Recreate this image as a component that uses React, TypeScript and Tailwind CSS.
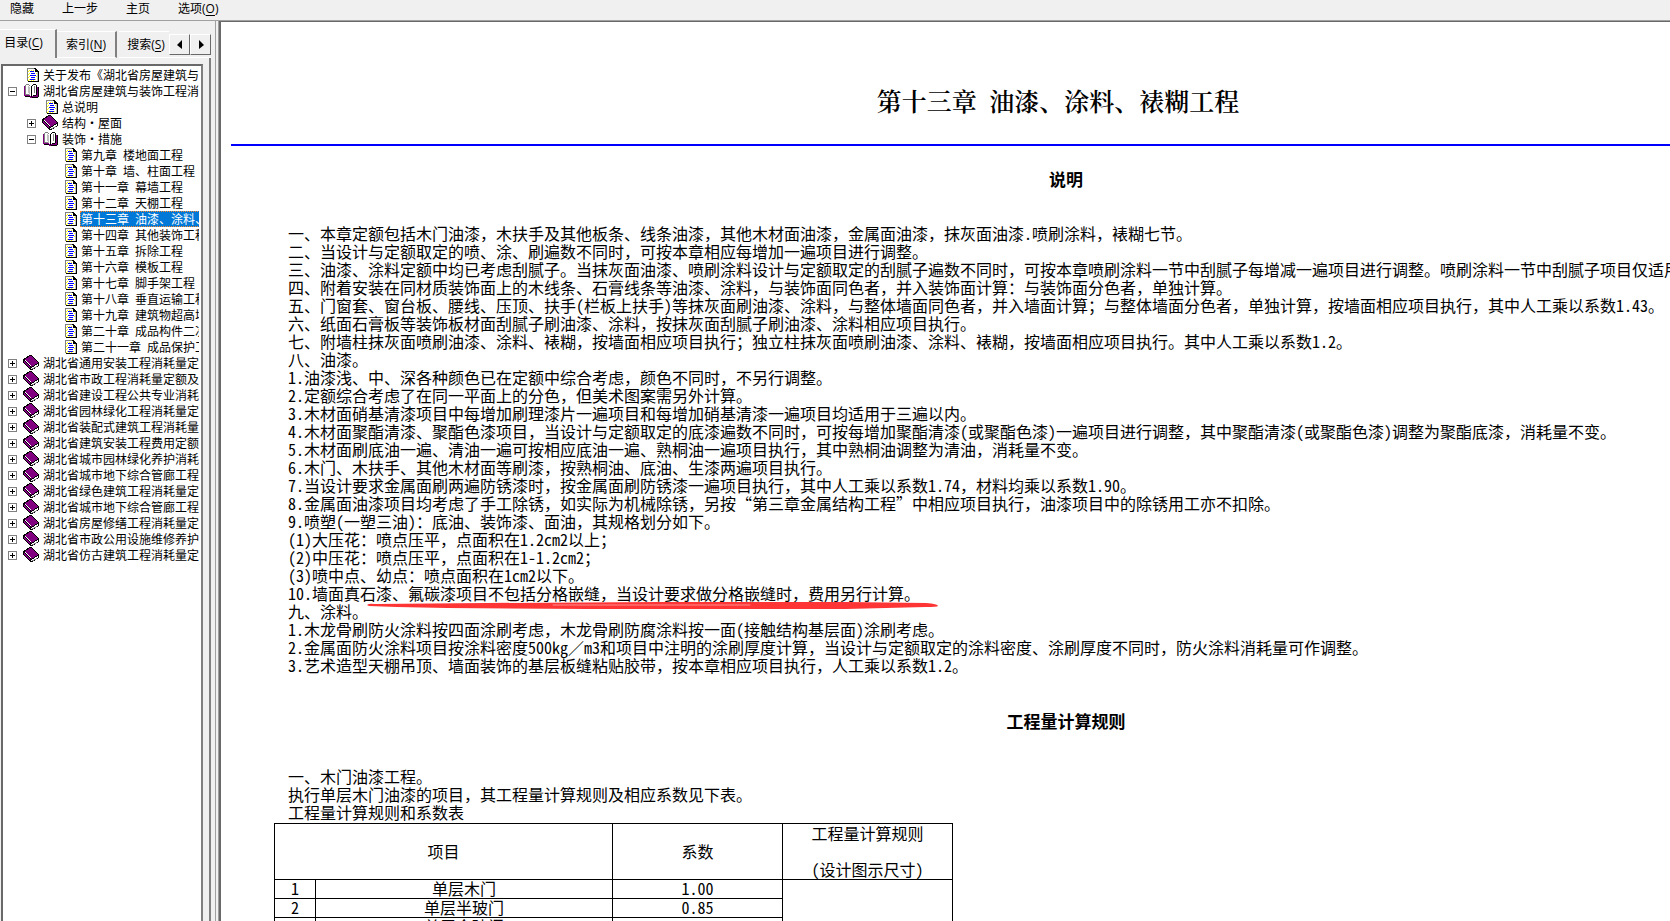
import React from "react";

type IconKind = "page" | "open" | "closed";

type Node = {
  level: 0 | 1 | 2;
  icon: IconKind;
  label: string;
  toggle?: "+" | "-";
  selected?: boolean;
};

const closedBook = (label: string): Node => ({ level: 0, icon: "closed", label, toggle: "+" });
const chapter = (label: string, selected = false): Node => ({ level: 2, icon: "page", label, selected });

const nodes: Node[] = [
  { level: 0, icon: "page", label: "关于发布《湖北省房屋建筑与" },
  { level: 0, icon: "open", label: "湖北省房屋建筑与装饰工程消", toggle: "-" },
  { level: 1, icon: "page", label: "总说明" },
  { level: 1, icon: "closed", label: "结构・屋面", toggle: "+" },
  { level: 1, icon: "open", label: "装饰・措施", toggle: "-" },
  chapter("第九章 楼地面工程"),
  chapter("第十章 墙、柱面工程"),
  chapter("第十一章 幕墙工程"),
  chapter("第十二章 天棚工程"),
  chapter("第十三章 油漆、涂料、裱糊工程", true),
  chapter("第十四章 其他装饰工程"),
  chapter("第十五章 拆除工程"),
  chapter("第十六章 模板工程"),
  chapter("第十七章 脚手架工程"),
  chapter("第十八章 垂直运输工程"),
  chapter("第十九章 建筑物超高增加费"),
  chapter("第二十章 成品构件二次运输"),
  chapter("第二十一章 成品保护工程"),
  closedBook("湖北省通用安装工程消耗量定"),
  closedBook("湖北省市政工程消耗量定额及"),
  closedBook("湖北省建设工程公共专业消耗"),
  closedBook("湖北省园林绿化工程消耗量定"),
  closedBook("湖北省装配式建筑工程消耗量"),
  closedBook("湖北省建筑安装工程费用定额"),
  closedBook("湖北省城市园林绿化养护消耗"),
  closedBook("湖北省城市地下综合管廊工程"),
  closedBook("湖北省绿色建筑工程消耗量定"),
  closedBook("湖北省城市地下综合管廊工程"),
  closedBook("湖北省房屋修缮工程消耗量定"),
  closedBook("湖北省市政公用设施维修养护"),
  closedBook("湖北省仿古建筑工程消耗量定"),
];

const notes: string[] = [
  "一、本章定额包括木门油漆，木扶手及其他板条、线条油漆，其他木材面油漆，金属面油漆，抹灰面油漆.喷刷涂料，裱糊七节。",
  "二、当设计与定额取定的喷、涂、刷遍数不同时，可按本章相应每增加一遍项目进行调整。",
  "三、油漆、涂料定额中均已考虑刮腻子。当抹灰面油漆、喷刷涂料设计与定额取定的刮腻子遍数不同时，可按本章喷刷涂料一节中刮腻子每增减一遍项目进行调整。喷刷涂料一节中刮腻子项目仅适用",
  "四、附着安装在同材质装饰面上的木线条、石膏线条等油漆、涂料，与装饰面同色者，并入装饰面计算：与装饰面分色者，单独计算。",
  "五、门窗套、窗台板、腰线、压顶、扶手(栏板上扶手)等抹灰面刷油漆、涂料，与整体墙面同色者，并入墙面计算；与整体墙面分色者，单独计算，按墙面相应项目执行，其中人工乘以系数1.43。",
  "六、纸面石膏板等装饰板材面刮腻子刷油漆、涂料，按抹灰面刮腻子刷油漆、涂料相应项目执行。",
  "七、附墙柱抹灰面喷刷油漆、涂料、裱糊，按墙面相应项目执行；独立柱抹灰面喷刷油漆、涂料、裱糊，按墙面相应项目执行。其中人工乘以系数1.2。",
  "八、油漆。",
  "1.油漆浅、中、深各种颜色已在定额中综合考虑，颜色不同时，不另行调整。",
  "2.定额综合考虑了在同一平面上的分色，但美术图案需另外计算。",
  "3.木材面硝基清漆项目中每增加刷理漆片一遍项目和每增加硝基清漆一遍项目均适用于三遍以内。",
  "4.木材面聚酯清漆、聚酯色漆项目，当设计与定额取定的底漆遍数不同时，可按每增加聚酯清漆(或聚酯色漆)一遍项目进行调整，其中聚酯清漆(或聚酯色漆)调整为聚酯底漆，消耗量不变。",
  "5.木材面刷底油一遍、清油一遍可按相应底油一遍、熟桐油一遍项目执行，其中熟桐油调整为清油，消耗量不变。",
  "6.木门、木扶手、其他木材面等刷漆，按熟桐油、底油、生漆两遍项目执行。",
  "7.当设计要求金属面刷两遍防锈漆时，按金属面刷防锈漆一遍项目执行，其中人工乘以系数1.74，材料均乘以系数1.90。",
  "8.金属面油漆项目均考虑了手工除锈，如实际为机械除锈，另按“第三章金属结构工程”中相应项目执行，油漆项目中的除锈用工亦不扣除。",
  "9.喷塑(一塑三油)：底油、装饰漆、面油，其规格划分如下。",
  "(1)大压花：喷点压平，点面积在1.2cm2以上；",
  "(2)中压花：喷点压平，点面积在1-1.2cm2；",
  "(3)喷中点、幼点：喷点面积在1cm2以下。",
  "10.墙面真石漆、氟碳漆项目不包括分格嵌缝，当设计要求做分格嵌缝时，费用另行计算。",
  "九、涂料。",
  "1.木龙骨刷防火涂料按四面涂刷考虑，木龙骨刷防腐涂料按一面(接触结构基层面)涂刷考虑。",
  "2.金属面防火涂料项目按涂料密度500kg／m3和项目中注明的涂刷厚度计算，当设计与定额取定的涂料密度、涂刷厚度不同时，防火涂料消耗量可作调整。",
  "3.艺术造型天棚吊顶、墙面装饰的基层板缝粘贴胶带，按本章相应项目执行，人工乘以系数1.2。",
];

const rules: string[] = [
  "一、木门油漆工程。",
  "执行单层木门油漆的项目，其工程量计算规则及相应系数见下表。",
  "工程量计算规则和系数表",
];

const rows: [string, string, string][] = [
  ["1", "单层木门", "1.00"],
  ["2", "单层半玻门", "0.85"],
  ["3", "单层全玻门", "0.75"],
];

function NodeIcon({ kind }: { kind: IconKind }) {
  if (kind === "page") {
    return (
      <svg width="16" height="16" viewBox="0 0 16 16" shapeRendering="crispEdges" className="mr-[3px] shrink-0" aria-hidden="true">
        <path d="M4 1h8v1h1v1h1v1h1v11H4z" fill="#fff" />
        <path d="M4 1h8v1H5v12H4z" fill="#808080" />
        <path d="M12 1h1v1h1v1h1v1h1v11H5v-1h10V5h-3V2h-1V1z" fill="#000" />
        <path d="M14 5h1v9h-1z" fill="#c0c0c0" />
        <path d="M6 3h1v1H6zM8 3h1v1H8zM10 3h1v1h-1zM5 4h1v1H5zM13 6h1v1h-1zM5 7h1v1H5zM6 6h1v1H6zM13 9h1v1h-1zM5 10h1v1H5zM6 9h1v1H6zM6 12h1v1H6zM8 13h1v1H8zM10 13h1v1h-1zM12 12h1v1h-1zM5 13h1v1H5z" fill="#ff0" />
        <path d="M7 4h4v1H7zM8 6h4v1H8zM7 8h6v1H7zM8 10h4v1H8zM7 12h5v1H7z" fill="#00f" />
      </svg>
    );
  }
  if (kind === "open") {
    return (
      <svg width="16" height="16" viewBox="0 0 16 16" shapeRendering="crispEdges" className="mr-[3px] shrink-0" aria-hidden="true">
        <path d="M1 3h1v9h5v1h1v-1h6V4h2v10H9v1H7v-1H2v-1H1z" fill="#800080" />
        <path d="M3 1h3v1h1v1h1v10H7v-1H6v-1H3z" fill="#fff" />
        <path d="M9 3h1V2h1V1h3v10h-3v1h-1v1H9z" fill="#fff" />
        <path d="M2 2h1v10H2zM3 1h3v1H3zM6 2h1v1H6zM3 11h3v1H3z" fill="#808080" />
        <path d="M5 3h1v7H5zM6 4h1v8H6z" fill="#c0c0c0" />
        <path d="M8 3h1v11H8zM9 2h1v1H9zM10 1h3v1h-3zM13 2h1v10h-1zM10 12h3v1h-3zM15 4h1v10h-1zM2 13h5v1H2zM9 14h6v1H9z" fill="#000" />
        <path d="M11 3h1v7h-1z" fill="#808080" />
      </svg>
    );
  }
  return (
    <svg width="16" height="16" viewBox="0 0 16 16" shapeRendering="crispEdges" className="mr-[3px] shrink-0" aria-hidden="true">
      <path d="M0 4L7 0h2l7 8v3l-7 4H7L0 8z" fill="#000" />
      <path d="M1 5l6-4h2l6 7-7 4z" fill="#800080" />
      <path d="M1 6l6 6v2L1 8z" fill="#800080" />
      <path d="M8 13l7-4v1l-1 1v1l-5 2H8z" fill="#fff" />
      <path d="M9 13h2v1H9zM11 12h2v1h-2zM13 11h1v1h-1z" fill="#808080" />
      <path d="M2 5h1v1H2zM3 6h1v1H3zM4 7h1v1H4zM5 8h1v1H5zM6 9h1v1H6zM7 10h1v1H7z" fill="#fff" />
    </svg>
  );
}

function Toggle({ sign }: { sign: "+" | "-" }) {
  return (
    <button type="button" aria-label={sign === "+" ? "展开" : "折叠"} className="size-[9px] shrink-0">
      <svg width="9" height="9" viewBox="0 0 9 9" shapeRendering="crispEdges" aria-hidden="true">
        <rect width="9" height="9" fill="#808080" />
        <rect x="1" y="1" width="7" height="7" fill="#fff" />
        <path d={sign === "+" ? "M2 4h5v1H2zM4 2h1v5H4z" : "M2 4h5v1H2z"} fill="#000" />
      </svg>
    </button>
  );
}

const indent = { 0: "pl-1", 1: "pl-[23px]", 2: "pl-[42px]" };

function TreeRow({ node }: { node: Node }) {
  return (
    <li className={`flex h-4 items-center ${indent[node.level]}`}>
      <span className="flex w-[15px] shrink-0">{node.toggle && <Toggle sign={node.toggle} />}</span>
      <NodeIcon kind={node.icon} />
      <a
        href="#"
        className={
          node.selected
            ? "h-4 shrink-0 bg-[#0078d7] px-px text-white outline-1 -outline-offset-1 outline-dotted outline-[#ff8728]"
            : "h-4 shrink-0 px-px"
        }
      >
        {node.label}
      </a>
    </li>
  );
}

function Key({ letter }: { letter: string }) {
  return (
    <span>
      (<u className="underline-offset-2">{letter}</u>)
    </span>
  );
}

function ArrowButton({ label, d }: { label: string; d: string }) {
  return (
    <button
      type="button"
      aria-label={label}
      className="flex h-[21px] w-[21px] items-center justify-center border border-t-white border-r-[#696969] border-b-[#696969] border-l-white bg-[#f0f0f0]"
    >
      <svg width="6" height="10" viewBox="0 0 6 10" aria-hidden="true">
        <path d={d} fill="#000" />
      </svg>
    </button>
  );
}

function Sidebar() {
  return (
    <aside className="flex w-[215px] shrink-0 flex-col pt-2">
      <div role="tablist" className="flex h-[29px] items-end pr-1 text-xs">
        <button type="button" role="tab" aria-selected="true" className="h-[29px] w-[57px] border-t border-r-2 border-t-white border-r-[#808080] pr-2 pb-[2px]">
          目录<Key letter="C" />
        </button>
        <button type="button" role="tab" aria-selected="false" className="h-[27px] w-[60px] border-t border-r-2 border-b border-t-white border-r-[#808080] border-b-white">
          索引<Key letter="N" />
        </button>
        <button type="button" role="tab" aria-selected="false" className="ml-[2px] h-[27px] w-[50px] border-t border-b border-white pl-1 whitespace-nowrap">
          搜索<Key letter="S" />
        </button>
        <div className="flex h-6 border-b border-white">
          <ArrowButton label="向左滚动" d="M5 0v9L0 5z" />
          <ArrowButton label="向右滚动" d="M1 0v9l5-4z" />
        </div>
      </div>
      <div className="mr-1 flex min-h-0 flex-1 border-r-2 border-[#808080] pt-[6px] pr-[6px] pl-px">
        <nav aria-label="目录" className="min-w-0 flex-1 overflow-hidden border-t-2 border-r-2 border-l-2 border-t-[#696969] border-r-[#808080] border-l-[#696969] bg-white pl-px font-['Noto_Sans_Mono_CJK_SC','Noto_Sans_CJK_SC',sans-serif] text-xs leading-4 whitespace-pre">
          <ul className="mr-[2px] overflow-hidden pt-px">
            {nodes.map((node, i) => (
              <TreeRow key={i} node={node} />
            ))}
          </ul>
        </nav>
      </div>
    </aside>
  );
}

function CoefficientTable() {
  return (
    <table className="mt-[2px] ml-[43px] w-[679px] table-fixed border-collapse text-center [&_td]:border [&_td]:border-black [&_td]:p-0 [&_td]:pb-[2px] [&_td]:leading-4 [&_th]:border [&_th]:border-black [&_th]:p-0 [&_th]:pb-px [&_th]:font-light">
      <colgroup>
        <col className="w-[41px]" />
        <col className="w-[297px]" />
        <col className="w-[170px]" />
        <col className="w-[170px]" />
      </colgroup>
      <thead>
        <tr className="h-14">
          <th colSpan={2}>项目</th>
          <th>系数</th>
          <th>
            工程量计算规则
            <br />
            <br />
            (设计图示尺寸)
          </th>
        </tr>
      </thead>
      <tbody>
        {rows.map(([no, name, value], i) => (
          <tr key={no} className="h-[19px]">
            <td>{no}</td>
            <td>{name}</td>
            <td>{value}</td>
            {i === 0 && <td rowSpan={rows.length} />}
          </tr>
        ))}
      </tbody>
    </table>
  );
}

function Marker() {
  return (
    <svg className="absolute top-[18px] left-[79px] h-2 w-[571px]" viewBox="0 0 572 8" preserveAspectRatio="none" aria-hidden="true">
      <path d="M0 3Q2 1 8 2L120 1 290 0 480 0 560 1Q572 2 572 4Q571 5 560 5L480 7 220 7 80 6 30 5 2 4z" fill="#ff3535" />
      <path d="M186 3H384" stroke="#ff8f8f" fill="none" />
    </svg>
  );
}

function Article() {
  return (
    <main className="min-w-0 flex-1 overflow-hidden border-t border-l-2 border-[#696969] bg-white pl-[10px] font-['Noto_Sans_Mono_CJK_SC','Noto_Sans_CJK_SC',sans-serif] text-base leading-[18px] font-light text-black">
      <div className="w-screen whitespace-nowrap">
        <h1 className="pt-[62px] pr-4 text-center font-['Noto_Serif_CJK_SC','Noto_Sans_CJK_SC',serif] text-[25px] leading-8 font-semibold">
          第十三章 <span className="ml-[6px]">油漆、涂料、裱糊工程</span>
        </h1>
        <hr className="mt-7 border-t-2 border-[#0000ff]" />
        <h2 className="pt-6 text-center text-[17px] font-bold">说明</h2>
        <div className="pt-9 pl-[57px]">
          {notes.map((note, i) => (
            <p key={i} className="relative">
              {note}
              {note.startsWith("10.") && <Marker />}
            </p>
          ))}
        </div>
        <h2 className="pt-[38px] text-center text-[17px] font-bold">工程量计算规则</h2>
        <div className="pt-[37px] pl-[57px]">
          {rules.map((rule) => (
            <p key={rule}>{rule}</p>
          ))}
        </div>
        <CoefficientTable />
      </div>
    </main>
  );
}

export default function App() {
  return (
    <div className="flex h-screen flex-col overflow-hidden bg-[#f0f0f0] font-['Open_Sans','Noto_Sans_CJK_SC',sans-serif] text-xs text-black">
      <nav aria-label="工具栏" className="flex h-5 shrink-0 items-start gap-7 pl-[10px] leading-[18px]">
        <button type="button">隐藏</button>
        <button type="button">上一步</button>
        <button type="button">主页</button>
        <button type="button">
          选项<Key letter="O" />
        </button>
      </nav>
      <div className="flex min-h-0 flex-1 border-t border-[#a0a0a0]">
        <Sidebar />
        <div className="w-1 shrink-0 border-r border-l border-r-[#a0a0a0] border-l-[#a0a0a0] bg-[#f0f0f0]" />
        <Article />
      </div>
    </div>
  );
}
